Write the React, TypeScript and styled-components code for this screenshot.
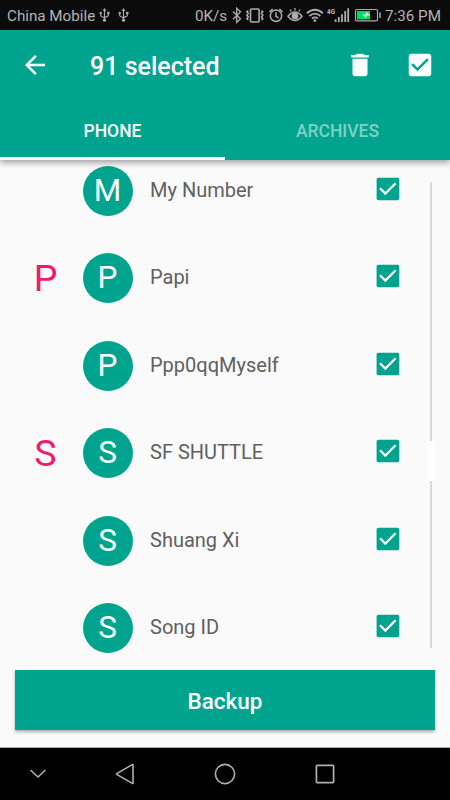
import React from "react";
import styled, { createGlobalStyle } from "styled-components";

const TEAL = "#00a38d";

const GlobalStyle = createGlobalStyle`
  *, *::before, *::after { box-sizing: border-box; }
  body { margin: 0; background: #fafafa; font-family: Roboto, "Liberation Sans", sans-serif; }
  svg { display: block; flex: none; }
`;

const Screen = styled.div`
  width: 450px;
  height: 800px;
  display: flex;
  flex-direction: column;
  overflow: hidden;
  background: #fafafa;
`;

const StatusBar = styled.div`
  position: relative;
  z-index: 2;
  height: 30px;
  flex: none;
  display: flex;
  align-items: center;
  padding: 0 0 0 7px;
  background: #0b0b0b;
  color: #b4b4b4;
  font-size: 15.2px;
  line-height: 30px;
  white-space: nowrap;
`;

const Carrier = styled.span`
  width: 92px;
  padding-top: 2px;
`;

const UsbGroup = styled.div`
  display: flex;
  gap: 8px;
  flex: 1;
`;

const Speed = styled.span`
  padding-top: 2px;
  width: 37px;
`;

const StatusIcons = styled.div`
  display: flex;
  align-items: center;
  width: 153px;
`;

const Clock = styled.span`
  width: 65px;
  padding-top: 2px;
`;

const Header = styled.header`
  position: relative;
  z-index: 1;
  height: 130px;
  flex: none;
  background: ${TEAL};
  color: #fff;
  box-shadow: 0 3px 6px rgba(0, 0, 0, 0.34);
`;

const Toolbar = styled.div`
  height: 70px;
  display: flex;
  align-items: center;
  padding: 0 15px 0 20px;
`;

const Title = styled.h1`
  flex: 1;
  margin: 0;
  padding: 3px 0 0 40px;
  font-size: 25px;
  line-height: 30px;
  font-weight: 500;
`;

const ToolbarActions = styled.div`
  display: flex;
  gap: 30px;
`;

const Tabs = styled.div`
  display: grid;
  grid-template-columns: 1fr 1fr;
  height: 60px;
`;

const Tab = styled.div<{ $active?: boolean }>`
  display: flex;
  align-items: center;
  justify-content: center;
  padding-top: ${(p) => (p.$active ? 4 : 1)}px;
  border-bottom: ${(p) => (p.$active ? "3px solid #f8fffd" : "none")};
  color: ${(p) => (p.$active ? "#fff" : "rgba(255, 255, 255, 0.5)")};
  font-size: 17.5px;
  font-weight: 500;
`;

const Content = styled.main`
  position: relative;
  flex: 1;
  min-height: 0;
  overflow: hidden;
`;

const ContactList = styled.ul`
  height: 510px;
  margin: 0;
  padding: 0;
  list-style: none;
  overflow: hidden;

  & > li:first-child { margin-top: -13.2px; }
`;

const ContactRow = styled.li`
  height: 87.5px;
  display: grid;
  grid-template-columns: 82.5px 50px 240px 30px;
  align-items: center;
`;

const SectionLetter = styled.span`
  padding-left: 8.5px;
  text-align: center;
  color: #ec1c70;
  font-size: 37.5px;
  line-height: 44px;
`;

const Avatar = styled.span`
  width: 50px;
  height: 50px;
  border-radius: 50%;
  background: ${TEAL};
  color: #fff;
  text-align: center;
  font-size: 31.5px;
  line-height: 50px;
`;

const Name = styled.span`
  padding: 0 0 1.5px 17.5px;
  color: #606060;
  font-size: 20px;
  line-height: 24px;
`;

const CheckSlot = styled.span`
  padding-bottom: 4px;
`;

const ScrollTrack = styled.div`
  position: absolute;
  top: 22px;
  right: 18px;
  width: 2px;
  height: 466px;
  background: #dadada;
`;

const ScrollThumb = styled.div`
  position: absolute;
  top: 259px;
  left: -3px;
  width: 8px;
  height: 40px;
  border-radius: 2px;
  background: #fff;
`;

const BackupButton = styled.button`
  display: block;
  width: 420px;
  height: 60px;
  margin: 0 15px;
  padding: 1px 0 0;
  border: 0;
  background: ${TEAL};
  color: #fff;
  font: 500 22.5px Roboto, "Liberation Sans", sans-serif;
  box-shadow: 0 2px 3px rgba(0, 0, 0, 0.3);
`;

const NavBar = styled.nav`
  height: 53px;
  flex: none;
  display: flex;
  align-items: center;
  background: #000;
  border-top: 1px solid #a9a9a9;
  padding: 0 0 0 20px;
`;

const NavKey = styled.span<{ $width: number }>`
  width: ${(p) => p.$width}px;
  display: flex;
  justify-content: center;
`;

const UsbIcon = () => (
  <svg width="11" height="14" viewBox="0 0 11 14" fill="none" stroke="#aaa" strokeWidth="1.2">
    <path d="M5.5 1.5v10M1.7 5v2.5c0 1.5 3.8 1.5 3.8 3M9.3 4.5v3c0 1.3-3.8 1.3-3.8 2.5" />
    <path d="M5.5 0 3.7 3h3.6z" fill="#aaa" stroke="none" />
    <circle cx="1.7" cy="5" r="1.2" fill="#aaa" stroke="none" />
    <path d="M8.1 3.8h2.4v2.4H8.1z" fill="#aaa" stroke="none" />
    <circle cx="5.5" cy="12.2" r="1.6" fill="#aaa" stroke="none" />
  </svg>
);

const StatusGlyphs = () => (
  <svg width="150" height="20" viewBox="232 5 150 20" fill="none" stroke="#adadad" strokeWidth="1.3">
    <path d="m233 11.5 7.5 7.3-3.8 3.7V8.2l3.8 3.6-7.5 7.4" />
    <rect x="250.5" y="9" width="8.6" height="13" rx="1" strokeWidth="1.6" />
    <path d="m248.3 10.5-1.4 1.4 1.4 1.7-1.4 1.7 1.4 1.7-1.4 1.7 1.4 1.3M261.4 10.5l1.4 1.4-1.4 1.7 1.4 1.7-1.4 1.7 1.4 1.7-1.4 1.3" strokeWidth="1.5" />
    <circle cx="276" cy="15.8" r="5.7" strokeWidth="1.5" />
    <path d="M276 12.3v4l2.5 1.6M269.4 12l3.3-2.9M282.6 12l-3.3-2.9" strokeWidth="1.5" />
    <path d="M288 16.2q7-8.5 14 0-7 8.500-14 0z" strokeWidth="1.5" />
    <circle cx="295" cy="16" r="2.7" fill="#adadad" />
    <path d="m290 9.500 1.200 2M295 8v2.400M300 9.500l-1.200 2" />
    <path d="M306.9 13.2q8-7 16 0M309.4 16q5.5-4.8 11 0M312 18.6q2.9-2.4 5.8 0" strokeWidth="1.8" />
    <circle cx="314.9" cy="20.6" r="1.3" fill="#adadad" stroke="none" />
    <text x="327" y="14" fill="#bcbcbc" stroke="none" fontSize="8" fontWeight="700" textLength="8" lengthAdjust="spacingAndGlyphs">4G</text>
    <path d="M335.6 19.200v2.800M338.8 17v5M342 14.300v7.700M345.2 11v11M348.2 8.300v13.700" strokeWidth="1.8" />
    <rect x="355.5" y="9.5" width="22" height="11.4" rx="1.5" strokeWidth="1.2" />
    <path d="M357 11h13v8.4h-13z" fill="#00db63" stroke="none" />
    <path d="m362 14.5 4.2-.1-.3-2.6 4.7 3.8-4.3-.1.2 2.7z" fill="#d4ffe5" stroke="none" />
    <path d="M380 12.5v5.4" strokeWidth="1.5" />
  </svg>
);

const BackIcon = () => (
  <svg width="30" height="30" viewBox="0 0 24 24" fill="#fff">
    <path d="M20 11H7.83l5.59-5.59L12 4l-8 8 8 8 1.41-1.41L7.83 13H20v-2z" />
  </svg>
);

const TrashIcon = () => (
  <svg width="30" height="30" viewBox="0 0 24 24" fill="#fff">
    <path d="M6 19c0 1.1.9 2 2 2h8c1.1 0 2-.9 2-2V7H6v12zM19 4h-3.5l-1-1h-5l-1 1H5v2h14V4z" />
  </svg>
);

const CheckIcon = ({ color }: { color: string }) => (
  <svg width="30" height="30" viewBox="0 0 24 24" fill={color}>
    <path d="M19 3H5c-1.11 0-2 .9-2 2v14c0 1.1.89 2 2 2h14c1.11 0 2-.9 2-2V5c0-1.1-.89-2-2-2zm-9 14l-5-5 1.41-1.41L10 14.17l7.59-7.59L19 8l-9 9z" />
  </svg>
);

const RowCheckIcon = () => (
  <svg width="30" height="30" viewBox="0 0 30 30">
    <rect x="3.6" y="3.7" width="22.7" height="22.5" rx="1.7" fill={TEAL} />
    <path d="m7 14.2 5.3 5.3L22.6 9.2" fill="none" stroke="#fff" strokeWidth="2.3" />
  </svg>
);

const contacts = [
  { name: "My Number", initial: "M" },
  { name: "Papi", initial: "P", section: "P" },
  { name: "Ppp0qqMyself", initial: "P" },
  { name: "SF SHUTTLE", initial: "S", section: "S" },
  { name: "Shuang Xi", initial: "S" },
  { name: "Song ID", initial: "S" },
];

export default function App() {
  return (
    <>
      <GlobalStyle />
      <Screen>
        <StatusBar>
          <Carrier>China Mobile</Carrier>
          <UsbGroup>
            <UsbIcon />
            <UsbIcon />
          </UsbGroup>
          <Speed>0K/s</Speed>
          <StatusIcons>
            <StatusGlyphs />
          </StatusIcons>
          <Clock>7:36 PM</Clock>
        </StatusBar>
        <Header>
          <Toolbar>
            <BackIcon />
            <Title>91 selected</Title>
            <ToolbarActions>
              <TrashIcon />
              <CheckIcon color="#fff" />
            </ToolbarActions>
          </Toolbar>
          <Tabs>
            <Tab $active>PHONE</Tab>
            <Tab>ARCHIVES</Tab>
          </Tabs>
        </Header>
        <Content>
          <ContactList>
            {contacts.map((c) => (
              <ContactRow key={c.name}>
                <SectionLetter>{c.section}</SectionLetter>
                <Avatar>{c.initial}</Avatar>
                <Name>{c.name}</Name>
                <CheckSlot>
                  <RowCheckIcon />
                </CheckSlot>
              </ContactRow>
            ))}
          </ContactList>
          <BackupButton>Backup</BackupButton>
          <ScrollTrack>
            <ScrollThumb />
          </ScrollTrack>
        </Content>
        <NavBar>
          <NavKey $width={35}>
            <svg width="18" height="10" viewBox="0 0 18 10" fill="none" stroke="#b0b0b0" strokeWidth="1.6">
              <path d="m1.5 1 7.5 7 7.5-7" />
            </svg>
          </NavKey>
          <NavKey $width={140}>
            <svg width="20" height="22" viewBox="0 0 20 22" fill="none" stroke="#b0b0b0" strokeWidth="1.6" strokeLinejoin="round">
              <path d="M18 2v18q0 .8-.8.4L1.8 11.4q-.6-.4 0-.8L17.2 1.6q.8-.4.8.4z" />
            </svg>
          </NavKey>
          <NavKey $width={60}>
            <svg width="22" height="22" viewBox="0 0 22 22" fill="none" stroke="#b0b0b0" strokeWidth="1.6">
              <circle cx="11" cy="11" r="9.6" />
            </svg>
          </NavKey>
          <NavKey $width={140}>
            <svg width="20" height="20" viewBox="0 0 20 20" fill="none" stroke="#b0b0b0" strokeWidth="1.7">
              <rect x="1.4" y="1.4" width="17.2" height="17.2" rx=".8" />
            </svg>
          </NavKey>
        </NavBar>
      </Screen>
    </>
  );
}
